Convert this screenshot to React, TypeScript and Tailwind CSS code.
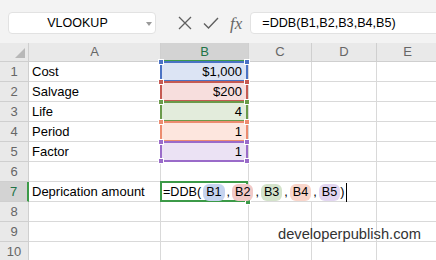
import React from "react";

const ranges = [
  { n: 1, a: "Cost", b: "$1,000", fill: "bg-[#dce4f4]", line: "border-[#4a72c4]", dot: "bg-[#4a72c4]" },
  { n: 2, a: "Salvage", b: "$200", fill: "bg-[#f7dedd]", line: "border-[#c55a52]", dot: "bg-[#c55a52]" },
  { n: 3, a: "Life", b: "4", fill: "bg-[#e3ecdc]", line: "border-[#6a9a4a]", dot: "bg-[#6a9a4a]" },
  { n: 4, a: "Period", b: "1", fill: "bg-[#fde6de]", line: "border-[#ec8b6f]", dot: "bg-[#ec8b6f]" },
  { n: 5, a: "Factor", b: "1", fill: "bg-[#ebe2f4]", line: "border-[#9a6bc9]", dot: "bg-[#9a6bc9]" },
];

const pills = [
  { t: "B1", c: "bg-[#c6d4ef]" },
  { t: "B2", c: "bg-[#f1c9c7]" },
  { t: "B3", c: "bg-[#d4e3cb]" },
  { t: "B4", c: "bg-[#f9d5ca]" },
  { t: "B5", c: "bg-[#e2d6f1]" },
];

const grid = "grid grid-cols-[29px_132px_88px_63px_65px_62px]";
const cell = "h-[20px] border-r border-b border-[#d9d9d9]";
const rowHead =
  "h-[20px] flex items-center justify-center border-r border-b border-[#cfcfcf] bg-[#e9e9e9] text-[13px] text-[#666]";

function Handle({ pos, dot }: { pos: string; dot: string }) {
  return <span className={`absolute w-[6px] h-[6px] border border-white ${dot} ${pos}`} />;
}

function EmptyRow({ n }: { n: number }) {
  return (
    <>
      <div className={rowHead}>{n}</div>
      <div className={cell} />
      <div className={cell} />
      <div className={cell} />
      <div className={cell} />
      <div className={cell} />
    </>
  );
}

export default function App() {
  return (
    <div className="relative w-[436px] h-[260px] overflow-hidden bg-white font-['Liberation_Sans',Arial,sans-serif] text-black">
      {/* formula bar */}
      <div className="flex items-start h-[43px] pt-[12px] bg-[#f3f3f3]">
        <div className="relative ml-[8px] w-[148px] h-[22px] flex items-center justify-center pr-[9px] rounded-[4px] bg-white border border-[#e2e2e2] text-[12.5px]">
          VLOOKUP
          <svg className="absolute right-[3px] top-[9px]" width="6" height="4" viewBox="0 0 6 4">
            <path d="M0 0h6L3 4z" fill="#9a9a9a" />
          </svg>
        </div>
        <svg className="ml-[22px] mt-[4px]" width="14" height="14" viewBox="0 0 14 14">
          <path d="M1 1l12 12M13 1L1 13" stroke="#5f5f5f" strokeWidth="1.3" fill="none" />
        </svg>
        <svg className="ml-[11px] mt-[4px]" width="16" height="14" viewBox="0 0 16 14">
          <path d="M1 7.5l4.5 4.5L15 2" stroke="#5f5f5f" strokeWidth="1.4" fill="none" />
        </svg>
        <span className="ml-[11px] mt-[-1px] font-['Liberation_Serif',serif] italic text-[17px] text-[#666]">fx</span>
        <div className="ml-[8px] flex-1 mr-[-8px] h-[22px] flex items-center pl-[11px] rounded-[4px] bg-white border border-[#e2e2e2] text-[12.6px]">
          =DDB(B1,B2,B3,B4,B5)
        </div>
      </div>

      {/* column headers */}
      <div className={grid}>
        <div className="relative h-[19px] border-r border-b border-[#cfcfcf] bg-[#e9e9e9]">
          <svg className="absolute right-[3px] bottom-[3px]" width="10" height="10" viewBox="0 0 10 10">
            <path d="M10 0v10H0z" fill="#b8b8b8" />
          </svg>
        </div>
        <div className="h-[19px] flex items-center justify-center border-r border-b border-[#cfcfcf] bg-[#e9e9e9] text-[13px] text-[#666]">A</div>
        <div className="h-[19px] flex items-center justify-center border-r border-b-2 border-r-[#cfcfcf] border-b-[#3c9a48] bg-[#d3d3d3] text-[13px] text-[#217346]">B</div>
        <div className="h-[19px] flex items-center justify-center border-r border-b border-[#cfcfcf] bg-[#e9e9e9] text-[13px] text-[#666]">C</div>
        <div className="h-[19px] flex items-center justify-center border-r border-b border-[#cfcfcf] bg-[#e9e9e9] text-[13px] text-[#666]">D</div>
        <div className="h-[19px] flex items-center justify-center border-r border-b border-[#cfcfcf] bg-[#e9e9e9] text-[13px] text-[#666]">E</div>

        {ranges.map((r) => (
          <React.Fragment key={r.n}>
            <div className={rowHead}>{r.n}</div>
            <div className={`${cell} flex items-center pl-[3px] pt-[1px] text-[13px]`}>{r.a}</div>
            <div className={`${cell} relative flex items-center justify-end pr-[6px] pt-[1px] text-[13px] ${r.fill}`}>
              <span className={`absolute left-[-1px] right-0 top-[-1px] bottom-[-1px] border-2 ${r.line}`} />
              <Handle pos="left-[-3px] top-[-3px]" dot={r.dot} />
              <Handle pos="right-[-2px] top-[-3px]" dot={r.dot} />
              {r.n === 5 && <Handle pos="left-[-3px] bottom-[-3px]" dot={r.dot} />}
              {r.n === 5 && <Handle pos="right-[-2px] bottom-[-3px]" dot={r.dot} />}
              <span className="relative">{r.b}</span>
            </div>
            <div className={cell} />
            <div className={cell} />
            <div className={cell} />
          </React.Fragment>
        ))}

        <EmptyRow n={6} />

        <div className="h-[20px] flex items-center justify-center border-r-2 border-b border-r-[#3c9a48] border-b-[#cfcfcf] bg-[#d3d3d3] text-[13px] text-[#217346]">7</div>
        <div className={`${cell} flex items-center pl-[3px] pt-[1px] text-[13px]`}>Deprication amount</div>
        <div className={`${cell} relative z-10`}>
          <span className="absolute left-[-1px] right-0 top-[-1px] bottom-[-1px] border-2 border-[#3c9a48]" />
          <span className="absolute right-[-3px] bottom-[-4px] w-[6px] h-[6px] border border-white bg-[#3c9a48]" />
          <div className="absolute left-[2px] top-[1px] h-[18px] flex items-center whitespace-nowrap text-[12.6px]">
            <span>=DDB(</span>
            <span className="ml-[2px] h-[17px] flex items-center px-[3px] rounded-[6px] bg-[#c6d4ef]">B1</span>
            {pills.slice(1).map((p) => (
              <React.Fragment key={p.t}>
                <span className="mx-[2px]">,</span>
                <span className={`h-[17px] flex items-center px-[3px] rounded-[6px] ${p.c}`}>{p.t}</span>
              </React.Fragment>
            ))}
            <span>)</span>
            <span className="ml-[2px] h-[19px] border-l border-black" />
          </div>
        </div>
        <div className="h-[20px] border-b border-[#d9d9d9]" />
        <div className={cell} />
        <div className={cell} />

        <EmptyRow n={8} />
        <EmptyRow n={9} />
        <EmptyRow n={10} />
      </div>

      <span className="absolute left-[278px] top-[223px] text-[14.7px] text-[#333]">developerpublish.com</span>
    </div>
  );
}
